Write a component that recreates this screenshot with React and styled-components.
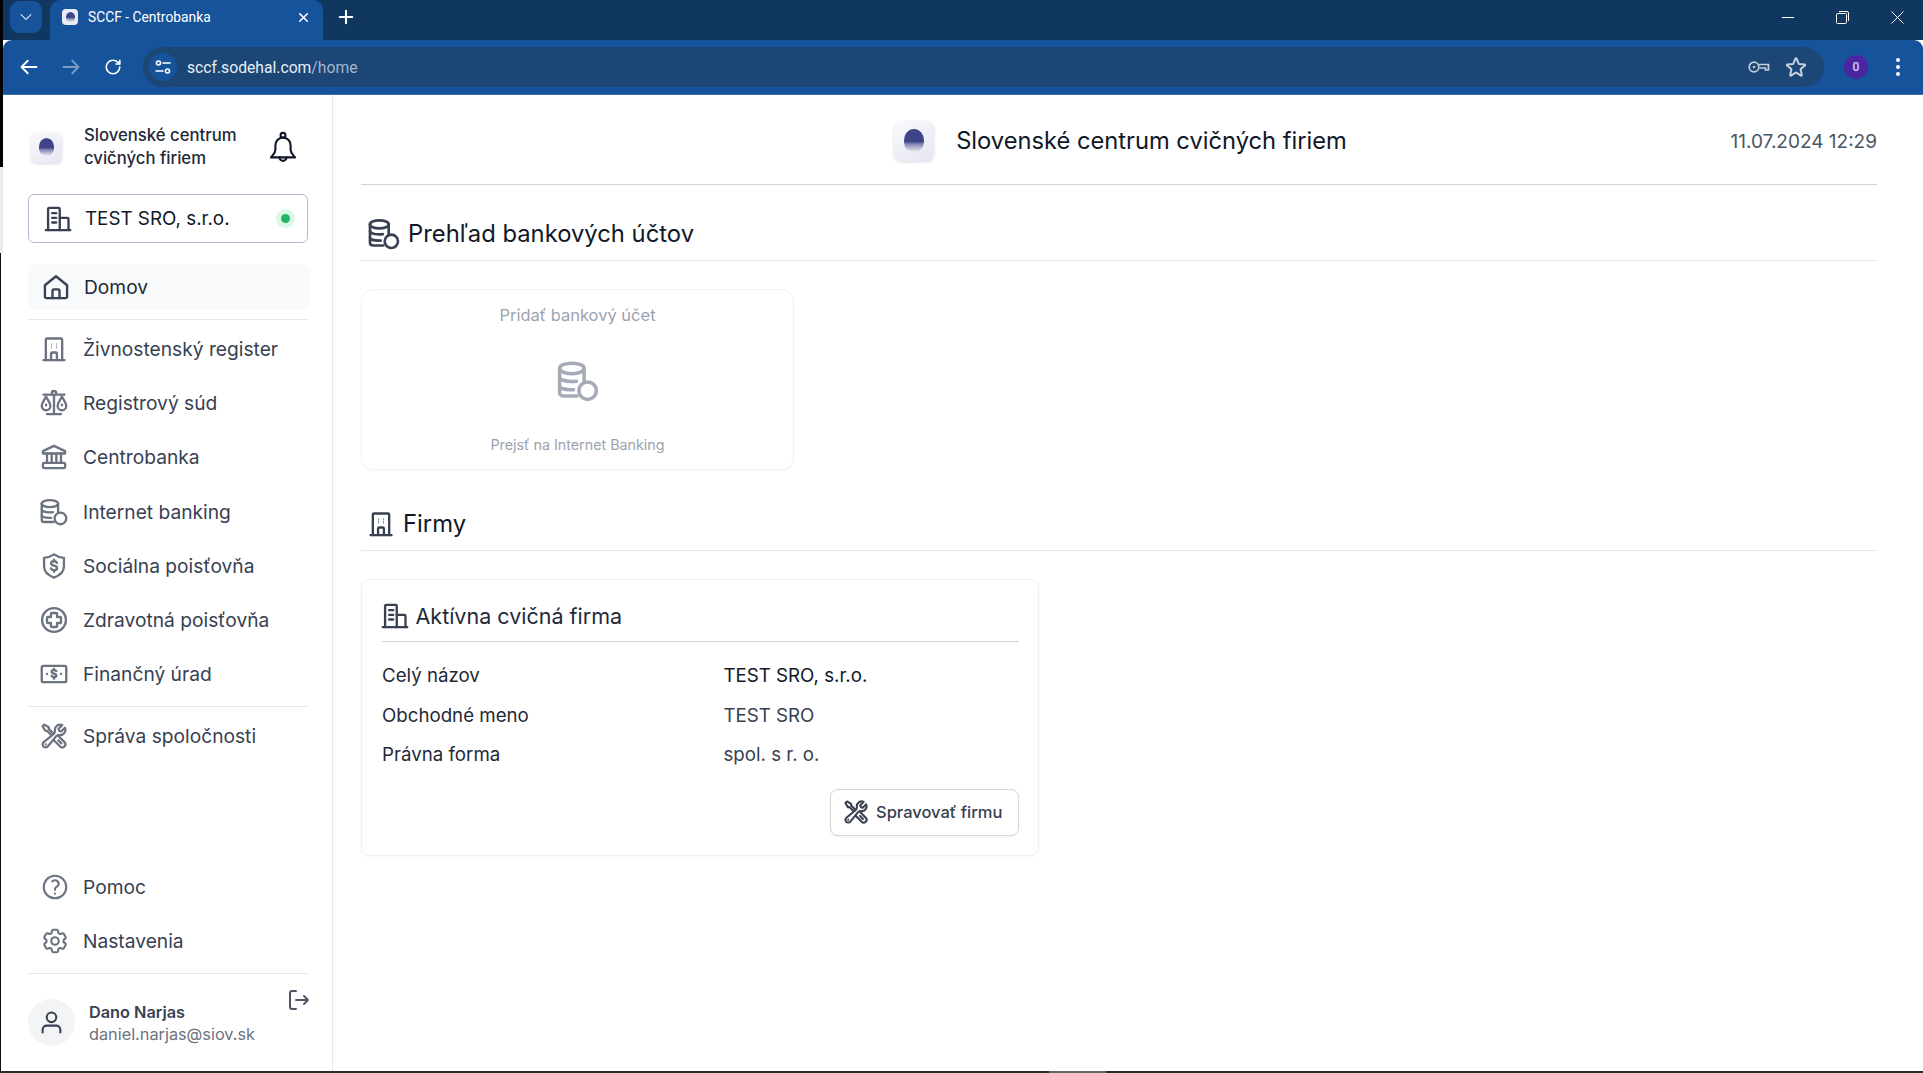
import React from 'react';
import styled, { createGlobalStyle } from 'styled-components';
import {
  HiOutlineWrenchScrewdriver, HiOutlineQuestionMarkCircle,
  HiOutlineCog6Tooth, HiOutlinePlus,
  HiOutlineXMark, HiOutlineArrowLeft, HiOutlineArrowRight,
  HiChevronDown, HiOutlineStar,
} from 'react-icons/hi2';
import { RotateCw } from 'lucide-react';

const Global = createGlobalStyle`
  html, body { margin: 0; padding: 0; height: 100%; background: #2b2b2b; overflow: hidden; }
  #root { height: 100%; }
  * { box-sizing: border-box; }
  body { font-family: Inter, "Noto Sans", sans-serif; color: #111827; }
`;

const Stroke = ({ size = 24, children, sw = 2 }) => (
  <svg width={size} height={size} viewBox="0 0 24 24" fill="none" stroke="currentColor" strokeWidth={sw} strokeLinecap="round" strokeLinejoin="round">{children}</svg>
);

const CoinsIcon = ({ size, sw }) => (
  <Stroke size={size} sw={sw}>
    <path d="M1.500 4.800c0-1.700 3-3 7-3s7 1.300 7 3v7.800" />
    <path d="M1.500 4.800c0 1.700 3 3 7 3s7-1.300 7-3" />
    <path d="M1.500 4.800v14c0 1.100 1.200 1.800 2.500 1.800h7.500" />
    <path d="M1.500 9.800c0 1.400 3 2.500 7 2.500.9 0 1.800-.07 2.600-.2" />
    <path d="M1.500 14.800c0 1.400 3 2.200 7 2.200h1" />
    <circle cx="17.500" cy="17.500" r="5" />
  </Stroke>
);
const ScaleIcon = ({ size }) => (
  <Stroke size={size}>
    <circle cx="12" cy="3.500" r="1.800" />
    <path d="M12 5.500V21.500M6 21.500h12M3 4.800h7M14 4.800h7" />
    <path d="M5.200 6.500c-1.300 3-3.700 5.200-3.700 8a3.700 3.700 0 0 0 7.400 0c0-2.800-2.400-5-3.700-8z" />
    <path d="M18.800 6.500c-1.300 3-3.700 5.200-3.700 8a3.700 3.700 0 0 0 7.400 0c0-2.800-2.400-5-3.700-8z" />
    <path d="M5.200 13.500v.5M18.800 13.500v.5" />
  </Stroke>
);
const ShieldIcon = ({ size }) => (
  <Stroke size={size}>
    <path d="M12 2c2.500 1.800 5 2.700 8.500 3v7.500c0 4.300-3.300 7.500-8.500 9.500-5.200-2-8.500-5.200-8.500-9.500V5c3.500-.3 6-1.200 8.500-3z" />
    <path d="M14.500 9.300c-.4-.9-1.400-1.400-2.500-1.400-1.400 0-2.500.7-2.500 1.900 0 2.600 5.100 1.300 5.100 3.900 0 1.200-1.200 1.900-2.600 1.900-1.200 0-2.200-.5-2.600-1.500M12 6.500v1.400M12 15.600V17" />
  </Stroke>
);
const HealthIcon = ({ size }) => (
  <Stroke size={size}>
    <circle cx="12" cy="12" r="10.200" />
    <path d="M10 6h4a.6.6 0 0 1 .6.6v2.800h2.800a.6.6 0 0 1 .6.6v4a.6.6 0 0 1-.6.6h-2.800v2.800a.6.6 0 0 1-.6.6h-4a.6.6 0 0 1-.6-.6v-2.800H6.600a.6.6 0 0 1-.6-.6v-4a.6.6 0 0 1 .6-.6h2.800V6.600A.6.6 0 0 1 10 6z" />
  </Stroke>
);
const CashIcon = ({ size }) => (
  <Stroke size={size}>
    <rect x="1.500" y="5" width="21" height="14" rx="1.500" />
    <path d="M14 9.500c-.4-.6-1.100-.9-2-.9-1.100 0-2 .5-2 1.500 0 2 4 1 4 3.100 0 .9-.9 1.400-2 1.400-.9 0-1.700-.3-2-1M12 7.700v1M12 14.700v1.300M6 12h.01M18 12h.01" />
  </Stroke>
);
const TowerIcon = ({ size }) => (
  <Stroke size={size}>
    <path d="M3 21.500h18" />
    <path d="M5 21.500V4a1 1 0 0 1 1-1h12a1 1 0 0 1 1 1v17.500" />
    <path d="M9.500 8h.5M14 8h.5M9.500 10.500h.5M14 10.500h.5" strokeWidth="2" strokeLinecap="butt" />
    <path d="M9.500 21.500V16a1 1 0 0 1 1-1h3a1 1 0 0 1 1 1v5.500" />
  </Stroke>
);
const OfficeIcon = ({ size }) => (
  <Stroke size={size}>
    <path d="M1.500 21.500h21" />
    <path d="M3.500 21.500V3.500a1 1 0 0 1 1-1h8a1 1 0 0 1 1 1v18" />
    <path d="M13.500 11h6.500a1 1 0 0 1 1 1v9.500" />
    <path d="M7 7h3.500M7 11h3.500M7 15h3.500" />
  </Stroke>
);
const HomeIcon = ({ size }) => (
  <Stroke size={size}>
    <path d="M2.500 10.500 12 2.800l9.500 7.700V20a1.500 1.500 0 0 1-1.500 1.500H4A1.500 1.500 0 0 1 2.500 20z" />
    <path d="M9 21.500V15a1 1 0 0 1 1-1h4a1 1 0 0 1 1 1v6.500" />
  </Stroke>
);
const BankIcon = ({ size }) => (
  <Stroke size={size}>
    <path d="M2.500 9V7L12 2.500 21.500 7v2z" />
    <path d="M6 9v8M10 9v8M14 9v8M18 9v8" />
    <rect x="2.500" y="17" width="19" height="4.500" rx="1" />
  </Stroke>
);
const BellIcon = ({ size }) => (
  <Stroke size={size} sw={1.600}>
    <circle cx="12" cy="3.200" r="1.800" />
    <path d="M12 5c-3.600 0-5.700 2.800-5.700 6v3c0 2.600-2 4-3.300 5.800h18c-1.300-1.800-3.300-3.200-3.300-5.800v-3c0-3.200-2.100-6-5.700-6z" />
    <path d="M9.400 19.800a2.600 2.600 0 0 0 5.200 0" />
  </Stroke>
);
const UserIcon = ({ size }) => (
  <Stroke size={size} sw={2}>
    <circle cx="12" cy="7" r="4.600" />
    <path d="M3.500 21.500V19c0-2.400 1.900-4 4-4h9c2.100 0 4 1.600 4 4v2.500" />
  </Stroke>
);
const LogoutIcon = ({ size }) => (
  <Stroke size={size}>
    <path d="M10 3H6A2 2 0 0 0 4 5v14a2 2 0 0 0 2 2h4" />
    <path d="M10 12h12M18 8l4 4-4 4" />
  </Stroke>
);
const KeyIcon = () => (
  <svg width="22" height="14" viewBox="0 0 22 14" fill="none" stroke="currentColor" strokeWidth="1.700">
    <circle cx="6" cy="7" r="4.800" /><circle cx="6" cy="7" r="1.300" fill="currentColor" stroke="none" />
    <path d="M11 4.500h9.500v5.500h-3V8h-6" />
  </svg>
);
const TuneIcon = () => (
  <svg width="16" height="14" viewBox="0 0 16 14" fill="none" stroke="currentColor" strokeWidth="1.600" strokeLinecap="round">
    <circle cx="3.500" cy="3" r="2" /><path d="M8 3h7" /><circle cx="12.500" cy="11" r="2" /><path d="M1 11h7" />
  </svg>
);
const RestoreIcon = () => (
  <svg width="13" height="13" viewBox="0 0 13 13" fill="none" stroke="currentColor" strokeWidth="1">
    <rect x=".5" y="2.500" width="10" height="10" rx="1" /><path d="M3 .5h8a1.500 1.500 0 0 1 1.500 1.500v8" />
  </svg>
);
const CloseThin = () => (
  <svg width="13" height="13" viewBox="0 0 13 13" stroke="currentColor" strokeWidth="1"><path d="M.5.5l12 12M12.500.5l-12 12" /></svg>
);

const Desktop = styled.div`
  height: 1071px;
  display: flex;
`;
const EdgeColumn = styled.div`
  width: 3px;
  flex: none;
  display: flex;
  flex-direction: column;
`;
const EdgeTop = styled.div`
  height: 167px;
  background: #000;
`;
const EdgeMiddle = styled.div`
  height: 86px;
  background: #ececec;
`;
const EdgeBottom = styled.div`
  flex: 1;
  background: #fff;
  border-left: 1px solid #111;
`;
const TaskStrip = styled.div`
  height: 2px;
  background: #2b2b2b;
`;
const TaskMark = styled.div`
  margin-left: 1049px;
  width: 57px;
  height: 2px;
  background: #666;
`;
const Frame = styled.div`
  flex: 1;
  min-width: 0;
  display: flex;
  flex-direction: column;
  background: #fff;
`;
const TabStrip = styled.div`
  height: 40px;
  background: #10375f;
  display: flex;
  align-items: flex-start;
  color: #fff;
  padding-left: 7px;
  flex: none;
`;
const TabSearch = styled.div`
  width: 32px;
  height: 32px;
  margin-top: 1px;
  border-radius: 9px;
  background: #16539b;
  display: flex;
  align-items: center;
  justify-content: center;
  font-size: 16px;
`;
const Tab = styled.div`
  width: 273px;
  height: 40px;
  margin-left: 8px;
  border-radius: 10px 10px 0 0;
  background: #16539b;
  display: flex;
  align-items: center;
  padding: 0 12px 6px 12px;
  gap: 10px;
  font-size: 13.800px;
  font-family: "Roboto", sans-serif;
`;
const Favicon = styled.div`
  width: 16px;
  height: 16px;
  border-radius: 4px;
  background: #e9eaf2;
  display: flex;
  align-items: center;
  justify-content: center;
`;
const TabTitle = styled.span`
  flex: 1;
`;
const NewTab = styled.div`
  margin: 5px 0 0 11px;
  width: 24px;
  height: 24px;
  display: flex;
  align-items: center;
  justify-content: center;
  font-size: 20px;
`;
const Spacer = styled.div`
  flex: 1;
`;
const WinButtons = styled.div`
  display: flex;
  align-items: center;
  height: 34px;
  padding-right: 19px;
  gap: 42px;
`;
const MinLine = styled.div`
  width: 12px;
  height: 1px;
  background: #fff;
`;
const Toolbar = styled.div`
  height: 55px;
  flex: none;
  background: #16539b;
  border-bottom: 1px solid #3b72ab;
  border-radius: 9px 9px 0 0;
  display: flex;
  align-items: center;
  padding: 0 12px 0 13px;
  color: #fff;
`;
const NavButton = styled.div`
  width: 26px;
  height: 26px;
  margin-right: 16px;
  display: flex;
  align-items: center;
  justify-content: center;
  font-size: 20px;
  color: ${p => (p.$off ? '#7b9cc6' : '#fff')};
`;
const Omnibox = styled.div`
  width: 1681px;
  margin-left: 1px;
  height: 40px;
  border-radius: 20px;
  background: #1b4675;
  display: flex;
  align-items: center;
  padding: 0 16px 0 6px;
`;
const SiteChip = styled.div`
  width: 28px;
  height: 28px;
  border-radius: 50%;
  background: #16539b;
  display: flex;
  align-items: center;
  justify-content: center;
  margin-right: 10px;
`;
const Url = styled.span`
  font: 400 15.700px Roboto, sans-serif;
  flex: 1;
  color: #e8eef6;
  span { color: #a3b6cc; }
`;
const OmniIcon = styled.div`
  display: flex;
  align-items: center;
  color: #c3cfdc;
  margin-left: 14px;
  font-size: 24px;
`;
const Profile = styled.div`
  width: 24px;
  height: 24px;
  margin-left: 20px;
  border-radius: 50%;
  background: #4c25a3;
  color: #dcd0ff;
  font: 500 12px Roboto, sans-serif;
  display: flex;
  align-items: center;
  justify-content: center;
`;
const Kebab = styled.div`
  margin-left: 28px;
  display: flex;
  flex-direction: column;
  gap: 3px;
  i { width: 4px; height: 4px; border-radius: 50%; background: #fff; display: block; }
`;

const Body = styled.div`
  flex: 1;
  display: flex;
  min-height: 0;
  background: #fff;
`;
const Sidebar = styled.aside`
  width: 330px;
  flex: none;
  border-right: 1px solid #e5e7eb;
  padding: 0 21px 0 25px;
  display: flex;
  flex-direction: column;
`;
const Brand = styled.div`
  height: 64px;
  margin-top: 20px;
  padding-left: 3px;
  display: flex;
  align-items: center;
`;
const LogoTile = styled.div`
  width: ${p => p.$size}px;
  height: ${p => p.$size}px;
  flex: none;
  border-radius: ${p => p.$size / 5}px;
  background: linear-gradient(145deg, #fafafd, #e5e6f0);
  box-shadow: 0 1px 3px rgba(60, 60, 110, .2);
  display: flex;
  align-items: center;
  justify-content: center;
`;
const LogoDot = styled.div`
  width: ${p => p.$size}px;
  height: ${p => p.$size * 1.150}px;
  border-radius: 50% 50% 45% 45%;
  background: linear-gradient(180deg, #3f4489 54%, rgba(63, 68, 137, .6) 66%, rgba(63, 68, 137, 0) 100%);
`;
const BrandName = styled.div`
  margin-left: 22px;
  flex: 1;
  font-size: 16.700px;
  font-weight: 500;
  line-height: 23px;
  color: #1f2937;
`;
const BellWrap = styled.div`
  color: #111827;
  display: flex;
  margin-right: 12px;
`;
const CompanyBox = styled.div`
  margin-top: 15px;
  height: 49px;
  width: 280px;
  border: 1px solid #b6b6d0;
  border-radius: 6px;
  display: flex;
  align-items: center;
  padding: 0 16px 0 15px;
  font-size: 18.800px;
  color: #111827;
`;
const CompanyIcon = styled.span`
  display: flex;
  color: #374151;
  margin-right: 13px;
`;
const StatusDot = styled.span`
  margin-left: auto;
  width: 9px;
  height: 9px;
  border-radius: 50%;
  background: #22b565;
  box-shadow: 0 0 0 5px #dcf7e6;
  margin-right: 1px;
`;
const Divider = styled.div`
  height: 1px;
  width: 280px;
  background: #e5e7eb;
  margin: ${p => p.$m || '0'};
`;
const ActiveItem = styled.div`
  margin-top: 21px;
  width: 282px;
  height: 46px;
  background: #f9fafb;
  border-radius: 8px;
  display: flex;
  align-items: center;
  padding-left: 14px;
  font-size: 19.200px;
  color: #1f2937;
  gap: 14px;
  svg { color: #374151; }
`;
const NavList = styled.div`
  display: flex;
  flex-direction: column;
`;
const NavItem = styled.div`
  height: 54.200px;
  display: flex;
  align-items: center;
  padding-left: 12px;
  gap: ${p => p.$gap || 15}px;
  font-size: 19.200px;
  color: #374151;
  svg { color: #6b7280; flex: none; }
`;
const Bottom = styled.div`
  margin-top: auto;
  padding-bottom: 25px;
  display: flex;
  flex-direction: column;
`;
const UserRow = styled.div`
  margin-top: 25px;
  display: flex;
  align-items: center;
  width: 284px;
  position: relative;
`;
const Avatar = styled.div`
  width: 47px;
  height: 47px;
  border-radius: 50%;
  background: #f3f4f6;
  display: flex;
  align-items: center;
  justify-content: center;
  color: #374151;
`;
const UserInfo = styled.div`
  margin-left: 14px;
`;
const UserName = styled.div`
  font-size: 16.300px;
  font-weight: 600;
  color: #374151;
  line-height: 22px;
`;
const UserMail = styled.div`
  font-size: 16.300px;
  color: #6b7280;
  line-height: 22px;
`;
const Logout = styled.div`
  position: absolute;
  right: 2px;
  top: -11px;
  color: #4b5563;
  display: flex;
`;

const Main = styled.main`
  flex: 1;
  padding: 0 46px 0 28px;
  min-width: 0;
`;
const Header = styled.header`
  height: 90px;
  border-bottom: 1px solid #d1d5db;
  position: relative;
  display: flex;
  align-items: center;
  justify-content: center;
  padding-top: 2px;
`;
const HeaderTitle = styled.div`
  display: flex;
  align-items: center;
  gap: 22px;
  font-size: 23.700px;
  color: #111827;
  margin-left: 3px;
`;
const DateText = styled.div`
  position: absolute;
  right: 0;
  top: 35px;
  font-size: 19px;
  color: #4b5563;
`;
const SectionHead = styled.div`
  height: ${p => p.$h}px;
  padding-top: ${p => p.$pt}px;
  border-bottom: 1px solid #e5e7eb;
  display: flex;
  align-items: center;
  padding-left: ${p => p.$pl}px;
  gap: ${p => p.$gap}px;
  font-size: 23.800px;
  color: #111827;
  svg { color: #374151; flex: none; }
`;
const AddCard = styled.div`
  margin-top: 28px;
  width: 433px;
  height: 181px;
  border: 1px solid #f0f1f3;
  border-radius: 12px;
  box-shadow: 0 1px 2px rgba(0, 0, 0, .03);
  display: flex;
  flex-direction: column;
  align-items: center;
  color: #9ca3af;
`;
const AddTitle = styled.div`
  margin-top: 14px;
  font-size: 16.500px;
  line-height: 22px;
`;
const AddIcon = styled.div`
  margin-top: 34px;
  height: 44px;
  display: flex;
  color: #a5aab6;
`;
const AddHint = styled.div`
  margin-top: 31px;
  font-size: 14.300px;
  line-height: 20px;
`;
const CompanyCard = styled.div`
  margin-top: 28px;
  width: 678px;
  height: 277px;
  border: 1px solid #eceef1;
  border-radius: 8px;
  box-shadow: 0 1px 2px rgba(0, 0, 0, .03);
  padding: 0 19px 0 20px;
`;
const CardHead = styled.div`
  height: 62px;
  padding-top: 10px;
  border-bottom: 1px solid #d1d5db;
  display: flex;
  align-items: center;
  gap: 7px;
  font-size: 21.500px;
  color: #1f2937;
  svg { color: #374151; margin-left: -1.500px; }
`;
const Rows = styled.dl`
  margin: 14px 0 0;
`;
const Row = styled.div`
  height: 39.500px;
  display: grid;
  grid-template-columns: 341.500px 1fr;
  align-items: center;
  font-size: 18.700px;
`;
const Term = styled.dt`
  color: #1f2937;
`;
const Def = styled.dd`
  margin: 0;
  color: ${p => (p.$strong ? '#111827' : '#374151')};
`;
const Actions = styled.div`
  display: flex;
  justify-content: flex-end;
  margin-top: 14px;
`;
const Button = styled.button`
  width: 189px;
  height: 47px;
  background: #fff;
  border: 1px solid #d1d5db;
  border-radius: 8px;
  box-shadow: 0 1px 2px rgba(0, 0, 0, .05);
  display: flex;
  align-items: center;
  padding: 0 0 0 12px;
  gap: 7px;
  font: 500 16.500px Inter, sans-serif;
  color: #374151;
`;

const navA = [
  [TowerIcon, 'Živnostenský register'],
  [ScaleIcon, 'Registrový súd'],
  [BankIcon, 'Centrobanka'],
  [CoinsIcon, 'Internet banking'],
  [ShieldIcon, 'Sociálna poisťovňa'],
  [HealthIcon, 'Zdravotná poisťovňa'],
  [CashIcon, 'Finančný úrad'],
];

export default function App() {
  return (
    <>
      <Global />
      <Desktop>
        <EdgeColumn>
          <EdgeTop />
          <EdgeMiddle />
          <EdgeBottom />
        </EdgeColumn>
        <Frame>
          <TabStrip>
            <TabSearch><HiChevronDown /></TabSearch>
            <Tab>
              <Favicon><LogoDot $size={9} /></Favicon>
              <TabTitle>SCCF - Centrobanka</TabTitle>
              <HiOutlineXMark size={15} strokeWidth={2.500} />
            </Tab>
            <NewTab><HiOutlinePlus strokeWidth={2.500} /></NewTab>
            <Spacer />
            <WinButtons>
              <MinLine />
              <RestoreIcon />
              <CloseThin />
            </WinButtons>
          </TabStrip>
          <Toolbar>
            <NavButton><HiOutlineArrowLeft strokeWidth={2.200} /></NavButton>
            <NavButton $off><HiOutlineArrowRight strokeWidth={2.200} /></NavButton>
            <NavButton><RotateCw size={18} strokeWidth={2.200} /></NavButton>
            <Omnibox>
              <SiteChip><TuneIcon /></SiteChip>
              <Url>sccf.sodehal.com<span>/home</span></Url>
              <OmniIcon><KeyIcon /></OmniIcon>
              <OmniIcon><HiOutlineStar strokeWidth={2} /></OmniIcon>
            </Omnibox>
            <Profile>0</Profile>
            <Kebab><i /><i /><i /></Kebab>
          </Toolbar>
          <Body>
            <Sidebar>
              <Brand>
                <LogoTile $size={31}><LogoDot $size={15} /></LogoTile>
                <BrandName>Slovenské centrum<br />cvičných firiem</BrandName>
                <BellWrap><BellIcon size={32} /></BellWrap>
              </Brand>
              <CompanyBox>
                <CompanyIcon><OfficeIcon size={28} /></CompanyIcon>
                TEST SRO, s.r.o.
                <StatusDot />
              </CompanyBox>
              <ActiveItem><HomeIcon size={28} />Domov</ActiveItem>
              <Divider $m="9px 0 2px" />
              <NavList>
                {navA.map(([Icon, label]) => (
                  <NavItem key={label}><Icon size={28} />{label}</NavItem>
                ))}
              </NavList>
              <Divider $m="5px 0 2px" />
              <NavItem><HiOutlineWrenchScrewdriver size={28} strokeWidth={1.900} />Správa spoločnosti</NavItem>
              <Bottom>
                <NavItem $gap={13}><HiOutlineQuestionMarkCircle size={30} strokeWidth={1.700} />Pomoc</NavItem>
                <NavItem $gap={13}><HiOutlineCog6Tooth size={30} strokeWidth={1.700} />Nastavenia</NavItem>
                <Divider $m="5px 0 0" />
                <UserRow>
                  <Avatar><UserIcon size={25} /></Avatar>
                  <UserInfo>
                    <UserName>Dano Narjas</UserName>
                    <UserMail>daniel.narjas@siov.sk</UserMail>
                  </UserInfo>
                  <Logout><LogoutIcon size={24} /></Logout>
                </UserRow>
              </Bottom>
            </Sidebar>
            <Main>
              <Header>
                <HeaderTitle>
                  <LogoTile $size={40}><LogoDot $size={20} /></LogoTile>
                  Slovenské centrum cvičných firiem
                </HeaderTitle>
                <DateText>11.07.2024 12:29</DateText>
              </Header>
              <SectionHead $h={76} $pt={22} $pl={7} $gap={8}><CoinsIcon size={32} />Prehľad bankových účtov</SectionHead>
              <AddCard>
                <AddTitle>Pridať bankový účet</AddTitle>
                <AddIcon><CoinsIcon size={42} /></AddIcon>
                <AddHint>Prejsť na Internet Banking</AddHint>
              </AddCard>
              <SectionHead $h={81} $pt={27} $pl={6} $gap={8}><TowerIcon size={28} />Firmy</SectionHead>
              <CompanyCard>
                <CardHead><OfficeIcon size={28} />Aktívna cvičná firma</CardHead>
                <Rows>
                  <Row><Term>Celý názov</Term><Def $strong>TEST SRO, s.r.o.</Def></Row>
                  <Row><Term>Obchodné meno</Term><Def>TEST SRO</Def></Row>
                  <Row><Term>Právna forma</Term><Def>spol. s r. o.</Def></Row>
                </Rows>
                <Actions>
                  <Button><HiOutlineWrenchScrewdriver size={26} strokeWidth={1.900} />Spravovať firmu</Button>
                </Actions>
              </CompanyCard>
            </Main>
          </Body>
        </Frame>
      </Desktop>
      <TaskStrip><TaskMark /></TaskStrip>
    </>
  );
}
